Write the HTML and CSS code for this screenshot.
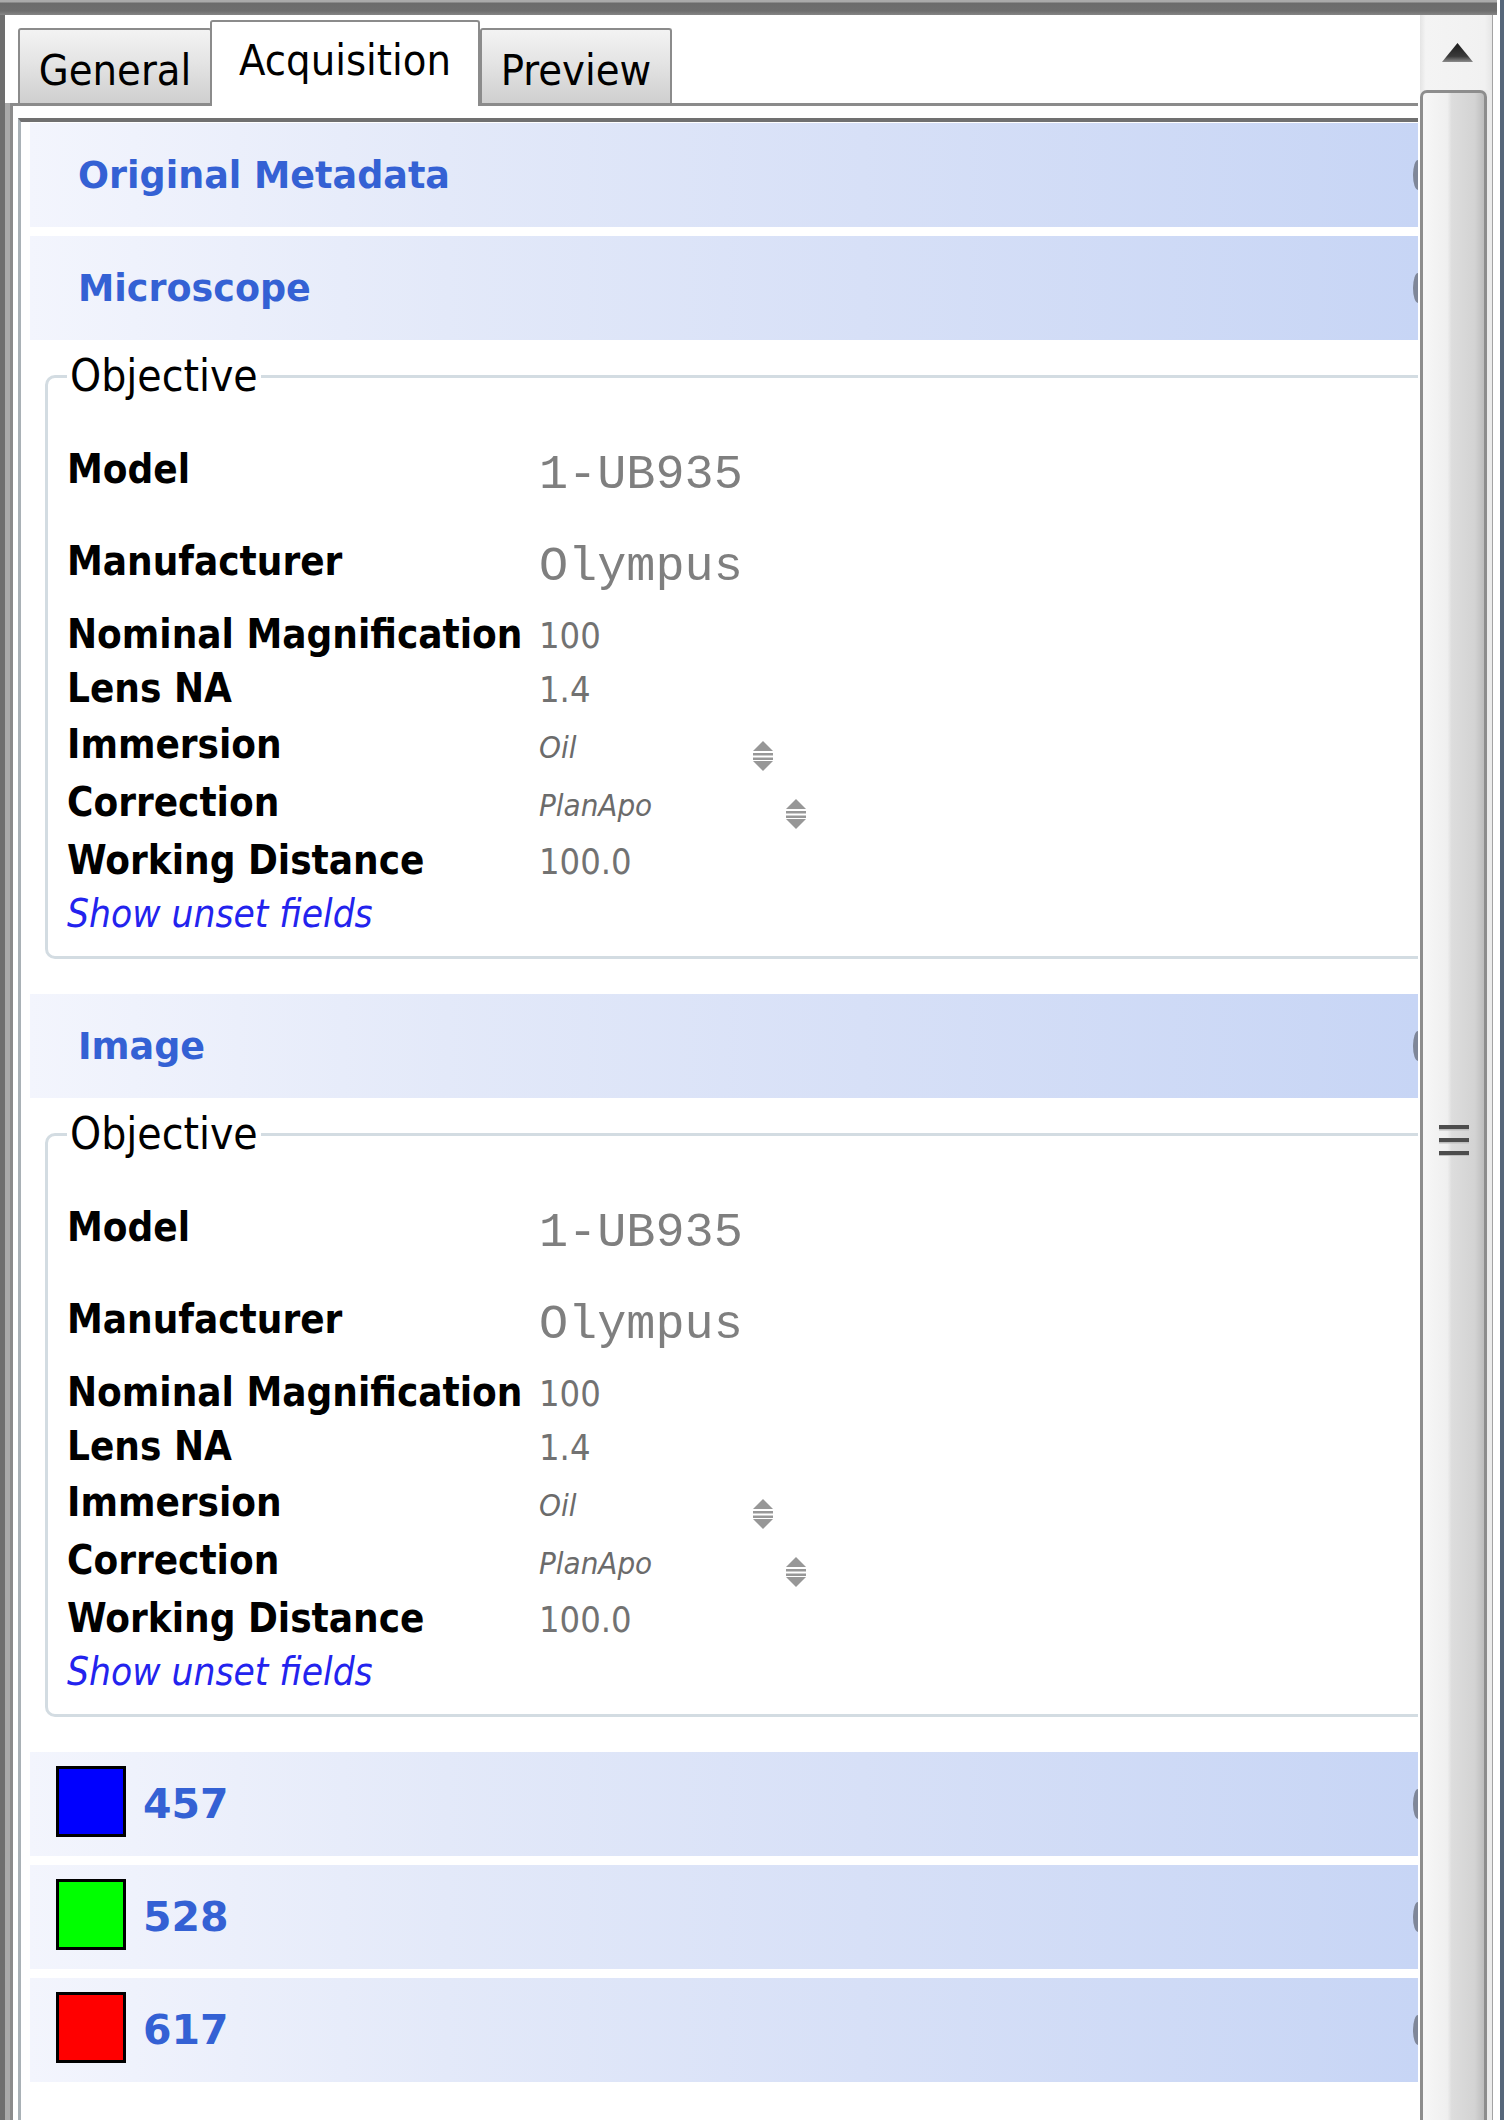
FILE: index.html
```html
<!DOCTYPE html>
<html lang="en">
<head>
<meta charset="utf-8">
<title>Acquisition</title>
<link rel="stylesheet" href="styles.css">
</head>
<body>
<div class="window">
  <div class="window-inner">
    <div class="titlebar"></div>
    <div class="frame">
      <div class="frame-left"></div>
      <div class="main">
        <div class="tabs">
          <div class="tab tab-general">General</div>
          <div class="tab tab-active">Acquisition</div>
          <div class="tab tab-preview">Preview</div>
        </div>
        <div class="panel">
          <div class="scroll">
            <div class="header"><span class="header-title">Original Metadata</span></div>
            <div class="header"><span class="header-title">Microscope</span></div>
            <fieldset class="group">
              <legend>Objective</legend>
              <div class="row row-lg"><span class="label">Model</span><span class="value value-mono">1-UB935</span></div>
              <div class="row row-lg"><span class="label">Manufacturer</span><span class="value value-mono">Olympus</span></div>
              <div class="row row-sm"><span class="label">Nominal Magnification</span><span class="value">100</span></div>
              <div class="row row-sm"><span class="label">Lens NA</span><span class="value">1.4</span></div>
              <div class="row row-md"><span class="label">Immersion</span><span class="value value-combo"><span class="combo-text combo-oil">Oil</span><svg class="spinner" viewBox="0 0 22 30"><path d="M11 0 L21 10 L1 10 Z"/><rect x="1" y="12" width="20" height="2.5"/><rect x="1" y="16.5" width="20" height="2.5"/><path d="M1 20 L21 20 L11 30 Z"/></svg></span></div>
              <div class="row row-md"><span class="label">Correction</span><span class="value value-combo"><span class="combo-text combo-plan">PlanApo</span><svg class="spinner" viewBox="0 0 22 30"><path d="M11 0 L21 10 L1 10 Z"/><rect x="1" y="12" width="20" height="2.5"/><rect x="1" y="16.5" width="20" height="2.5"/><path d="M1 20 L21 20 L11 30 Z"/></svg></span></div>
              <div class="row row-md"><span class="label">Working Distance</span><span class="value">100.0</span></div>
              <div class="row row-link"><span class="link">Show unset fields</span></div>
            </fieldset>
            <div class="header"><span class="header-title">Image</span></div>
            <fieldset class="group">
              <legend>Objective</legend>
              <div class="row row-lg"><span class="label">Model</span><span class="value value-mono">1-UB935</span></div>
              <div class="row row-lg"><span class="label">Manufacturer</span><span class="value value-mono">Olympus</span></div>
              <div class="row row-sm"><span class="label">Nominal Magnification</span><span class="value">100</span></div>
              <div class="row row-sm"><span class="label">Lens NA</span><span class="value">1.4</span></div>
              <div class="row row-md"><span class="label">Immersion</span><span class="value value-combo"><span class="combo-text combo-oil">Oil</span><svg class="spinner" viewBox="0 0 22 30"><path d="M11 0 L21 10 L1 10 Z"/><rect x="1" y="12" width="20" height="2.5"/><rect x="1" y="16.5" width="20" height="2.5"/><path d="M1 20 L21 20 L11 30 Z"/></svg></span></div>
              <div class="row row-md"><span class="label">Correction</span><span class="value value-combo"><span class="combo-text combo-plan">PlanApo</span><svg class="spinner" viewBox="0 0 22 30"><path d="M11 0 L21 10 L1 10 Z"/><rect x="1" y="12" width="20" height="2.5"/><rect x="1" y="16.5" width="20" height="2.5"/><path d="M1 20 L21 20 L11 30 Z"/></svg></span></div>
              <div class="row row-md"><span class="label">Working Distance</span><span class="value">100.0</span></div>
              <div class="row row-link"><span class="link">Show unset fields</span></div>
            </fieldset>
            <div class="header header-channel"><span class="swatch swatch-blue"></span><span class="header-title header-title-channel">457</span></div>
            <div class="header header-channel"><span class="swatch swatch-green"></span><span class="header-title header-title-channel">528</span></div>
            <div class="header header-channel"><span class="swatch swatch-red"></span><span class="header-title header-title-channel">617</span></div>
          </div>
        </div>
      </div>
      <div class="scrollbar">
        <div class="scroll-up">
          <svg class="up-arrow" viewBox="0 0 31 19"><defs><linearGradient id="ua" x1="0" y1="0" x2="0" y2="1"><stop offset="0" stop-color="#1c1c1c"/><stop offset="0.7" stop-color="#3a3a3a"/><stop offset="1" stop-color="#8c8c8c"/></linearGradient></defs><path d="M15.5 0 L31 19 L0 19 Z" fill="url(#ua)"/></svg>
        </div>
        <div class="thumb">
          <svg class="grip" viewBox="0 0 30 31"><rect x="0" y="0" width="30" height="4" fill="#4d4d4d"/><rect x="0" y="4" width="30" height="1.5" fill="#bdbdbd"/><rect x="0" y="13" width="30" height="4" fill="#4d4d4d"/><rect x="0" y="17" width="30" height="1.5" fill="#bdbdbd"/><rect x="0" y="26" width="30" height="4" fill="#4d4d4d"/><rect x="0" y="30" width="30" height="1" fill="#bdbdbd"/></svg>
        </div>
      </div>
    </div>
  </div>
  <div class="frame-right"></div>
</div>
</body>
</html>
```
FILE: styles.css
```css
html, body {
  margin: 0;
  padding: 0;
  background: #ffffff;
}

.window {
  display: flex;
  width: 1508px;
  height: 2120px;
  overflow: hidden;
}

.window-inner {
  flex: 1;
  min-width: 0;
  display: flex;
  flex-direction: column;
}

.titlebar {
  flex: none;
  height: 15px;
  background: linear-gradient(#aaaaaa 0, #aaaaaa 2px, #6b6b6b 3px, #6e6e6e 11px, #858585 15px);
}

.frame {
  flex: 1;
  min-height: 0;
  display: flex;
}

.frame-left {
  flex: none;
  width: 5px;
  background: #6e6e6e;
}

.frame-right {
  flex: none;
  width: 11px;
  background: linear-gradient(to right, #ffffff 0, #ffffff 3px, #56677a 3px, #56677a 7px, #ffffff 7px);
}

.main {
  flex: 1;
  min-width: 0;
  display: flex;
  flex-direction: column;
}

/* ---------- tabs ---------- */
.tabs {
  flex: none;
  display: flex;
  align-items: flex-end;
  padding: 5px 0 0 13px;
}

.tab {
  box-sizing: border-box;
  height: 75px;
  padding-top: 15px;
  border: 2px solid #8b8b8b;
  border-bottom: none;
  border-radius: 3px 3px 0 0;
  background: linear-gradient(#f3f3f3, #e4e4e4 45%, #cfcfcf);
  font-family: "DejaVu Sans Condensed", "DejaVu Sans", sans-serif;
  font-stretch: condensed;
  font-size: 43px;
  line-height: 50px;
  color: #000000;
  text-align: center;
}

.tab-general {
  width: 194px;
}

.tab-active {
  position: relative;
  z-index: 1;
  width: 270px;
  height: 86px;
  margin: 0 0 -3px -2px;
  padding-top: 13px;
  background: #ffffff;
}

.tab-preview {
  width: 192px;
}

/* ---------- panel ---------- */
.panel {
  flex: 1;
  min-height: 0;
  display: flex;
  flex-direction: column;
  margin: 0 2px 0 5px;
  padding: 12px 0 0 5px;
  border-top: 3px solid #8b8b8b;
  border-left: 3px solid #8b8b8b;
  box-shadow: -5px 0 0 #a9a9a9;
}

.scroll {
  flex: 1;
  min-height: 0;
  overflow: hidden;
  padding: 1px 0 0 9px;
  border-top: 4px solid #707070;
  border-left: 3px solid #a9b1b6;
}

/* ---------- section headers ---------- */
.header {
  position: relative;
  overflow: hidden;
  box-sizing: border-box;
  height: 104px;
  margin-bottom: 9px;
  padding-left: 48px;
  display: flex;
  align-items: center;
  background: linear-gradient(to right, #f3f5fd 0%, #e3e9f9 30%, #d7e0f7 60%, #c7d5f5 100%);
}

.header::after {
  content: "";
  position: absolute;
  right: -5px;
  top: 50%;
  width: 10px;
  height: 30px;
  margin-top: -15px;
  border-radius: 50%;
  background: #7f8799;
}

.header-title {
  font-family: "DejaVu Sans", "Verdana", sans-serif;
  font-weight: bold;
  font-size: 36.5px;
  color: #3461d4;
}

.header-channel {
  padding-left: 26px;
}

.header-title-channel {
  font-size: 41px;
}

.swatch {
  flex: none;
  box-sizing: border-box;
  width: 70px;
  height: 71px;
  margin: 0 17px 5px 0;
  border: 3px solid #000000;
}

.swatch-blue { background: #0000ff; }
.swatch-green { background: #00ff00; }
.swatch-red { background: #ff0000; }

/* ---------- field groups ---------- */
.group {
  min-width: 0;
  margin: 10px -40px 35px 15px;
  padding: 21px 0 17px 19px;
  border: 3px solid #d3dce2;
  border-radius: 10px;
}

.group legend {
  padding: 0 3px;
  font-family: "DejaVu Sans Condensed", "DejaVu Sans", sans-serif;
  font-stretch: condensed;
  font-size: 44px;
  line-height: 52px;
  color: #000000;
}

.row {
  white-space: nowrap;
}

.row-lg { height: 92px; line-height: 92px; }
.row-md { height: 58px; line-height: 58px; }
.row-sm { height: 54px; line-height: 54px; }
.row-link { height: 50px; line-height: 50px; }

.label {
  display: inline-block;
  width: 472px;
  font-family: "DejaVu Sans Condensed", "DejaVu Sans", sans-serif;
  font-stretch: condensed;
  font-weight: bold;
  font-size: 40px;
  color: #000000;
}

.value {
  font-family: "DejaVu Sans Condensed", "DejaVu Sans", sans-serif;
  font-stretch: condensed;
  font-size: 36px;
  color: #727272;
}

.value-mono {
  font-family: "Liberation Mono", "Courier New", monospace;
  font-size: 48.5px;
  color: #7f7f7f;
  vertical-align: -5px;
}

.value-combo {
  font-style: italic;
  font-size: 31px;
  color: #6b6b6b;
}

.combo-text {
  display: inline-block;
}

.combo-oil { width: 213px; }
.combo-plan { width: 246px; }

.spinner {
  width: 22px;
  height: 30px;
  vertical-align: -13px;
  fill: #979797;
}

.link {
  font-family: "DejaVu Sans Condensed", "DejaVu Sans", sans-serif;
  font-stretch: condensed;
  font-style: italic;
  font-size: 38.5px;
  color: #2323ee;
}

/* ---------- scrollbar ---------- */
.scrollbar {
  flex: none;
  box-sizing: border-box;
  width: 73px;
  margin-right: 4px;
  display: flex;
  flex-direction: column;
  background: #ebebeb;
  border-right: 1px solid #a3a3a3;
}

.scroll-up {
  flex: none;
  box-sizing: border-box;
  height: 75px;
  padding: 28px 0 0 3px;
  display: flex;
  justify-content: center;
  background: linear-gradient(to right, #e4e4e4, #f4f4f4 8%, #f1f1f1 90%, #e6e6e6);
}

.up-arrow {
  width: 31px;
  height: 19px;
}

.thumb {
  flex: none;
  box-sizing: border-box;
  width: 67px;
  height: 2098px;
  border: 3px solid #8d8d8d;
  border-bottom: none;
  border-radius: 7px 7px 0 0;
  display: flex;
  align-items: center;
  justify-content: center;
  background: linear-gradient(to right, #f7f7f7 0%, #efefef 40%, #dddddd 47%, #d3d3d3 85%, #bdbdbd 100%);
}

.grip {
  width: 30px;
  height: 31px;
}
```
